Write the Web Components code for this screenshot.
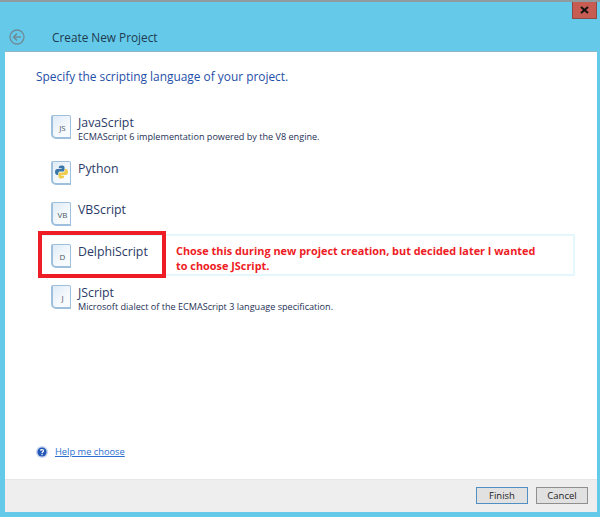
<!DOCTYPE html>
<html>
<head>
<meta charset="utf-8">
<style>
    html, body { margin: 0; height: 517px; overflow: hidden; }
    body { font-family: "Open Sans", "Noto Sans", sans-serif; }
</style>
</head>
<body>
<wizard-window heading="Create New Project">
    <h-line slot="lead">Specify the scripting language of your project.</h-line>
    <lang-item name="JavaScript" desc="ECMAScript 6 implementation powered by the V8 engine." glyph="JS"></lang-item>
    <lang-item name="Python" glyph="py"></lang-item>
    <lang-item name="VBScript" glyph="VB"></lang-item>
    <lang-item name="DelphiScript" glyph="D" selected note="Chose this during new project creation, but decided later I wanted to choose JScript."></lang-item>
    <lang-item name="JScript" desc="Microsoft dialect of the ECMAScript 3 language specification." glyph="J"></lang-item>
</wizard-window>

<script>
class WizardWindow extends HTMLElement {
    constructor() {
        super();
        this._shadow = this.attachShadow({ mode: 'open' });
    }
    connectedCallback() {
        const heading = this.getAttribute('heading');
        this._shadow.innerHTML = `
            <style>
                :host {
                    display: flex;
                    flex-direction: column;
                    height: 517px;
                    box-sizing: border-box;
                    background: #65c9ea;
                    border-top: 2px solid #8f9a9f;
                    padding: 0 3px 5px 5px;
                }
                .close-row { display: flex; justify-content: flex-end; flex: none; }
                .close {
                    width: 25px; height: 17px; box-sizing: border-box;
                    background: #c75c52; border: 1px solid #8d4a46; border-top: none;
                    display: flex; align-items: center; justify-content: center;
                }
                .title { display: flex; align-items: center; height: 32px; flex: none; box-sizing: border-box; padding-top: 4px; }
                .back { margin-left: 4px; width: 16px; height: 16px; }
                .title span { margin-left: 27px; font-size: 11.8px; color: #1d3c4e; }
                .panel {
                    flex: 1;
                    display: flex;
                    flex-direction: column;
                    background: #fff;
                    border-top: 1px solid #93b6c6;
                    min-height: 0;
                }
                .body { flex: 1; padding: 15px 22px 0 31px; display: flex; flex-direction: column; min-height: 0; }
                .list { margin-top: 30px; display: flex; flex-direction: column; }
                .help { margin-top: auto; margin-bottom: 21px; display: flex; align-items: center; gap: 7px; }
                .help a { font-size: 9.3px; color: #2a6fd0; text-decoration: underline; }
                .foot {
                    height: 33px; flex: none; box-sizing: border-box;
                    background: #eeeeee;
                    border-top: 1px solid #e6e6e6;
                    display: flex; justify-content: flex-end; align-items: flex-start;
                    gap: 8px; padding: 7px 9px 0 0;
                }
                button {
                    width: 52px; height: 17px; padding: 0; box-sizing: border-box;
                    font: 9.5px "Open Sans", sans-serif; color: #222;
                    background: #e1e1e1; border: 1px solid #adadad;
                }
                button.def { border-color: #4f8fc4; }
                button.cancel { border-color: #8f8f8f; }
            </style>
            <div class="close-row">
                <div class="close">
                    <svg width="9" height="8" viewBox="0 0 9 8"><path d="M1 1l7 6M8 1L1 7" stroke="#111" stroke-width="2"/></svg>
                </div>
            </div>
            <div class="title">
                <svg class="back" viewBox="0 0 16 16" fill="none" stroke="#6f8c98" stroke-width="1.3">
                    <circle cx="8" cy="8" r="7"/>
                    <path d="M12 8H4.5M8 4.5L4.5 8 8 11.5" stroke-width="1.5"/>
                </svg>
                <span>${heading}</span>
            </div>
            <div class="panel">
                <div class="body">
                    <slot name="lead"></slot>
                    <div class="list"><slot></slot></div>
                    <div class="help">
                        <svg width="12" height="12" viewBox="0 0 12 12">
                            <circle cx="6" cy="6" r="6" fill="#c9d7ef"/>
                            <circle cx="6" cy="6" r="4.6" fill="#2358b8"/>
                            <path d="M4.5 4.6C4.7 3.4 7.6 3.3 7.5 4.9 7.4 5.9 6 6 6 7.2" fill="none" stroke="#fff" stroke-width="1.2"/>
                            <rect x="5.4" y="8" width="1.2" height="1.2" fill="#fff"/>
                        </svg>
                        <a>Help me choose</a>
                    </div>
                </div>
                <div class="foot">
                    <button class="def">Finish</button>
                    <button class="cancel">Cancel</button>
                </div>
            </div>
        `;
    }
}

class HLine extends HTMLElement {
    constructor() {
        super();
        this.attachShadow({ mode: 'open' }).innerHTML = `
            <style>
                :host { display: block; font-size: 11.9px; line-height: 18px; color: #1f4fa8; }
            </style>
            <slot></slot>
        `;
    }
}

class LangItem extends HTMLElement {
    constructor() {
        super();
        this._shadow = this.attachShadow({ mode: 'open' });
    }
    connectedCallback() {
        const glyph = this.getAttribute('glyph');
        const desc = this.getAttribute('desc');
        const note = this.getAttribute('note');
        const art = glyph === 'py'
            ? `<svg class="py" width="13" height="14" viewBox="0 0 12 13">
                   <path d="M6 0.5C3.6 0.5 3.5 1.5 3.5 3H6.2V3.6H2C0.5 3.6 0 5 0 6.5S0.7 9.2 2 9.2H3V7.6C3 6.6 3.8 6 4.8 6H7.4C8.2 6 8.8 5.4 8.8 4.6V2.2C8.8 1 7.6 0.5 6 0.5Z" fill="#3a76a8"/>
                   <path d="M6 12.5C8.4 12.5 8.5 11.5 8.5 10H5.8V9.4H10C11.5 9.4 12 8 12 6.5S11.3 3.8 10 3.8H9V5.4C9 6.4 8.2 7 7.2 7H4.6C3.8 7 3.2 7.6 3.2 8.4V10.8C3.2 12 4.4 12.5 6 12.5Z" fill="#f0cc4e"/>
               </svg>`
            : `<span class="g">${glyph}</span>`;
        this._shadow.innerHTML = `
            <style>
                :host { display: block; height: 41.5px; position: relative; }
                :host([glyph="JS"]) { margin-bottom: 4px; }
                .row {
                    position: relative;
                    height: 100%; box-sizing: border-box;
                    display: flex; align-items: flex-start; gap: 7px;
                    padding: 0 0 0 15px;
                }
                .band {
                    position: absolute; left: 4px; right: 0; top: -9.5px; height: 42px;
                    box-sizing: border-box; border: 2px solid #e3f7fd;
                }
                .icon {
                    width: 20px; height: 24px; flex: none; box-sizing: border-box;
                    background: linear-gradient(135deg, #dfebf6, #f8fbfe 70%);
                    border: 1px solid #9fc0dc; border-left-width: 2px; border-bottom-width: 2px;
                    border-radius: 2px 2px 0 5px;
                    display: flex; align-items: center; justify-content: center;
                }
                .g { font-size: 8px; color: #4c5a66; padding-left: 2px; padding-top: 2px; }
                .name { font-size: 12.3px; line-height: 16px; color: #2b3a67; }
                .desc { font-size: 9.1px; line-height: 12px; color: #253056; white-space: nowrap; }
                .note {
                    width: 368px; margin-top: -1px;
                    font-size: 10.9px; font-weight: 700; line-height: 15px; color: #ee1c25;
                }
                .label { width: 91px; }
                :host(:not([selected])) .label { width: auto; }
                .mark {
                    position: absolute; left: 2px; top: -12.5px; width: 128px; height: 47px;
                    box-sizing: border-box; border: 4px solid #ee1c25;
                }
            </style>
            ${note ? '<div class="band"></div>' : ''}
            <div class="row">
                <div class="icon">${art}</div>
                <div class="label">
                    <div class="name">${this.getAttribute('name')}</div>
                    ${desc ? `<div class="desc">${desc}</div>` : ''}
                </div>
                ${note ? `<div class="note">${note}</div>` : ''}
            </div>
            ${this.hasAttribute('selected') ? '<div class="mark"></div>' : ''}
        `;
    }
}

customElements.define('wizard-window', WizardWindow);
customElements.define('h-line', HLine);
customElements.define('lang-item', LangItem);
</script>
</body>
</html>
